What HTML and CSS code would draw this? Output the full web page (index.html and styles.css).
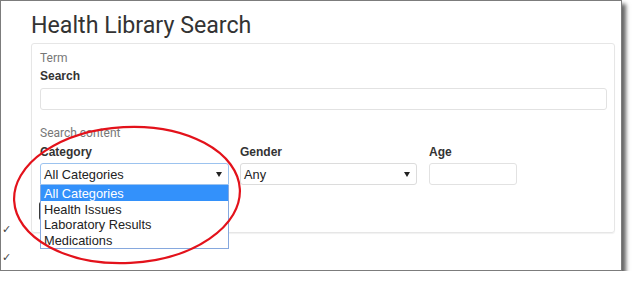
FILE: index.html
```html
<!DOCTYPE html>
<html lang="en">
<head>
    <meta charset="UTF-8">
    <meta name="viewport" content="width=device-width, initial-scale=1.0">
    <title>Health Library Search</title>
    <link rel="stylesheet" href="styles.css">
</head>
<body>
    <div class="window">
        <div class="gutter">
            <span class="check">&#10003;</span>
            <span class="check">&#10003;</span>
        </div>
        <div class="main">
            <h1>Health Library Search</h1>
            <div class="panel">
                <div class="section-title">Term</div>
                <label class="label" for="search">Search</label>
                <div class="input wide" id="search"></div>

                <div class="section-title gap-top">Search content</div>
                <div class="row">
                    <div class="field cat">
                        <div class="label">Category</div>
                        <div class="select focused">
                            <span>All Categories</span>
                            <svg class="arrow" width="6" height="5" viewBox="0 0 6 5"><path d="M0 0h6L3 5z" fill="#222"/></svg>
                        </div>
                        <ul class="dropdown">
                            <li class="active">All Categories</li>
                            <li>Health Issues</li>
                            <li>Laboratory Results</li>
                            <li>Medications</li>
                        </ul>
                    </div>
                    <div class="field gender">
                        <div class="label">Gender</div>
                        <div class="select">
                            <span>Any</span>
                            <svg class="arrow" width="6" height="5" viewBox="0 0 6 5"><path d="M0 0h6L3 5z" fill="#222"/></svg>
                        </div>
                    </div>
                    <div class="field age">
                        <div class="label">Age</div>
                        <div class="input"></div>
                    </div>
                </div>
                <div class="button"></div>
            </div>
        </div>
        <svg class="circle" width="620" height="269" viewBox="0 0 620 269">
            <ellipse cx="126" cy="194" rx="113" ry="68" transform="rotate(-3 126 194)" fill="none" stroke="#e3121b" stroke-width="2.2"/>
        </svg>
    </div>
</body>
</html>
```

FILE: styles.css
```css
body {
    margin: 0;
    background: #fff;
    font-family: 'Liberation Sans', Arial, sans-serif;
    color: #333;
}
.window {
    position: relative;
    width: 620px;
    height: 269px;
    border: 1px solid #7c7c7c;
    box-shadow: 4px 4px 4px rgba(0, 0, 0, 0.6);
    display: grid;
    grid-template-columns: 30px 1fr;
    background: #fff;
}
.gutter {
    display: flex;
    flex-direction: column;
    gap: 14px;
    padding-top: 222px;
    padding-left: 1px;
}
.check {
    font-family: 'DejaVu Sans', sans-serif;
    font-size: 11px;
    line-height: 14px;
    color: #444;
}
.main {
    padding-top: 7px;
}
h1 {
    margin: 0 0 1px;
    font-family: Roboto, sans-serif;
    font-weight: 400;
    font-size: 23.2px;
    line-height: 34px;
    color: #333;
}
.panel {
    width: 566px;
    height: 176px;
    padding: 6px 8px;
    border: 1px solid #e6e6e6;
    border-radius: 3px;
    box-shadow: 0 1px 1px rgba(0, 0, 0, 0.06);
}
.section-title {
    font-family: Roboto, sans-serif;
    font-size: 12px;
    line-height: 16px;
    color: #777;
}
.gap-top {
    margin-top: 15px;
}
.label {
    display: block;
    margin-top: 2px;
    font-weight: bold;
    font-size: 12px;
    line-height: 16px;
    color: #333;
}
.input {
    height: 20px;
    border: 1px solid #e2e2e2;
    border-radius: 3px;
    margin-top: 4px;
}
.input.wide {
    width: 565px;
}
.row {
    display: flex;
    gap: 11px;
}
.field {
    position: relative;
}
.field .label {
    margin-top: 3px;
}
.cat {
    width: 189px;
}
.gender {
    width: 177px;
}
.age {
    width: 88px;
    margin-left: 1px;
}
.age .input {
    margin-top: 3px;
}
.select {
    height: 20px;
    margin-top: 3px;
    padding: 0 6px 0 3px;
    border: 1px solid #dcdcdc;
    border-radius: 3px;
    display: flex;
    align-items: center;
    justify-content: space-between;
    font-size: 12.8px;
    color: #222;
}
.select.focused {
    border-color: #9cc3ef;
    border-radius: 3px 3px 0 0;
}
.dropdown {
    position: absolute;
    left: 0;
    right: 0;
    top: 100%;
    margin: 0;
    padding: 0 0 1px;
    list-style: none;
    background: #fff;
    border: 1px solid #86a8de;
    border-top: none;
    z-index: 2;
}
.dropdown li {
    box-sizing: border-box;
    height: 15.6px;
    padding: 1px 0 0 3px;
    line-height: 16px;
    font-size: 12.8px;
    color: #222;
}
.dropdown li.active {
    background: #3391fb;
    color: #fff;
}
.button {
    width: 60px;
    height: 18px;
    margin-top: 17px;
    margin-left: -1px;
    background: #3a3a3a;
    border-radius: 2px;
}
.circle {
    position: absolute;
    left: 0;
    top: 0;
    pointer-events: none;
    z-index: 3;
}
```
